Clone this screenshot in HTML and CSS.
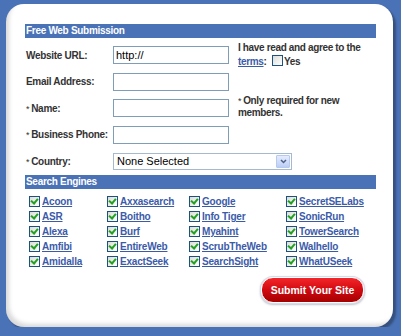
FILE: index.html
```html
<!DOCTYPE html>
<html lang="en">
<head>
    <meta charset="UTF-8">
    <title>Free Web Submission</title>
    <link rel="stylesheet" href="styles.css">
</head>
<body>
<div class="panel">
    <div class="bar">Free Web Submission</div>

    <div class="form">
        <label class="lbl">Website URL:</label>
        <input class="field" type="text" value="http://">
        <div class="note agree">I have read and agree to the<br><a href="#">terms</a>: <span class="box"></span>Yes</div>

        <label class="lbl">Email Address:</label>
        <input class="field" type="text">

        <label class="lbl"><span class="req">*</span>Name:</label>
        <input class="field" type="text">
        <div class="note only"><span class="req">*</span>Only required for new<br>members.</div>

        <label class="lbl"><span class="req">*</span>Business Phone:</label>
        <input class="field" type="text">

        <label class="lbl"><span class="req">*</span>Country:</label>
        <div class="select">None Selected
            <span class="arrow">
                <svg width="7" height="5" viewBox="0 0 7 5"><path d="M1 1 L3.5 3.5 L6 1" fill="none" stroke="#4d6185" stroke-width="1.5"/></svg>
            </span>
        </div>
    </div>

    <div class="bar">Search Engines</div>

    <div class="engines">
        <label class="eng"><span class="chk"></span><a href="#">Acoon</a></label>
        <label class="eng"><span class="chk"></span><a href="#">Axxasearch</a></label>
        <label class="eng"><span class="chk"></span><a href="#">Google</a></label>
        <label class="eng"><span class="chk"></span><a href="#">SecretSELabs</a></label>

        <label class="eng"><span class="chk"></span><a href="#">ASR</a></label>
        <label class="eng"><span class="chk"></span><a href="#">Boitho</a></label>
        <label class="eng"><span class="chk"></span><a href="#">Info Tiger</a></label>
        <label class="eng"><span class="chk"></span><a href="#">SonicRun</a></label>

        <label class="eng"><span class="chk"></span><a href="#">Alexa</a></label>
        <label class="eng"><span class="chk"></span><a href="#">Burf</a></label>
        <label class="eng"><span class="chk"></span><a href="#">Myahint</a></label>
        <label class="eng"><span class="chk"></span><a href="#">TowerSearch</a></label>

        <label class="eng"><span class="chk"></span><a href="#">Amfibi</a></label>
        <label class="eng"><span class="chk"></span><a href="#">EntireWeb</a></label>
        <label class="eng"><span class="chk"></span><a href="#">ScrubTheWeb</a></label>
        <label class="eng"><span class="chk"></span><a href="#">Walhello</a></label>

        <label class="eng"><span class="chk"></span><a href="#">Amidalla</a></label>
        <label class="eng"><span class="chk"></span><a href="#">ExactSeek</a></label>
        <label class="eng"><span class="chk"></span><a href="#">SearchSight</a></label>
        <label class="eng"><span class="chk"></span><a href="#">WhatUSeek</a></label>
    </div>

    <div class="actions">
        <button class="submit">Submit Your Site</button>
    </div>
</div>
</body>
</html>
```

FILE: styles.css
```css
body {
    margin: 0;
    background: #4a72b6;
    font-family: "Liberation Sans", Arial, sans-serif;
    color: #333;
}

.panel {
    margin: 4px 8px 0 6px;
    height: 323px;
    box-sizing: border-box;
    padding: 20px 17px 0 19px;
    background: #fff;
    border-radius: 18px;
    box-shadow: 3px 3px 2px rgba(30, 40, 60, 0.45), inset 4px -4px 4px -1px rgba(0, 0, 0, 0.15);
}

.bar {
    height: 14px;
    line-height: 14px;
    background: #4a72b6;
    color: #fff;
    font-size: 10px;
    font-weight: bold;
    letter-spacing: -0.3px;
    padding-left: 1px;
}

.form {
    display: grid;
    grid-template-columns: 88px 125px 1fr;
    grid-auto-rows: 18px;
    row-gap: 8.5px;
    margin: 8px 0 5px;
}

.lbl {
    grid-column: 1;
    align-self: center;
    font-size: 10px;
    font-weight: bold;
    letter-spacing: -0.3px;
    padding-left: 1px;
}

.req {
    font-weight: normal;
    font-size: 9px;
    margin-right: 2px;
}

.field {
    grid-column: 2;
    width: 116px;
    height: 18px;
    box-sizing: border-box;
    border: 1px solid #7f9db9;
    padding: 0 2px;
    font-family: "Liberation Sans", Arial, sans-serif;
    font-size: 11px;
    color: #000;
    outline: none;
}

.note {
    grid-column: 3;
    font-size: 10px;
    font-weight: bold;
    letter-spacing: -0.35px;
}

.agree {
    grid-row: 1 / span 2;
    margin-top: -5px;
    line-height: 14px;
}

.only {
    grid-row: 3 / span 2;
    margin-top: -4px;
    line-height: 12px;
}

.note a,
.eng a {
    color: #3b5ba9;
    text-decoration: underline;
}

.box {
    display: inline-block;
    width: 9px;
    height: 9px;
    border: 1px solid #1c5180;
    background: linear-gradient(135deg, #dcdcd7, #fff);
    vertical-align: -1px;
    margin: 0 1px 0 3px;
}

.select {
    grid-column: 2 / span 2;
    width: 179px;
    height: 17px;
    box-sizing: border-box;
    align-self: center;
    border: 1px solid #a5b9cf;
    display: flex;
    align-items: center;
    justify-content: space-between;
    padding-left: 3px;
    font-size: 11px;
    color: #000;
}

.arrow {
    width: 14px;
    height: 13px;
    margin-right: 1px;
    display: flex;
    align-items: center;
    justify-content: center;
    background: linear-gradient(#e4ecfd, #bccdf6);
    border: 1px solid #b8c9ee;
    box-sizing: border-box;
    border-radius: 1px;
}

.engines {
    display: grid;
    grid-template-columns: 78px 82px 97px 1fr;
    grid-auto-rows: 15px;
    padding: 5px 0 0 4px;
}

.eng {
    display: flex;
    align-items: center;
    gap: 2px;
    font-size: 10px;
    font-weight: bold;
    letter-spacing: -0.2px;
}

.chk {
    position: relative;
    width: 9px;
    height: 9px;
    border: 1px solid #1c5180;
    background: linear-gradient(135deg, #dcdcd7, #fff);
}

.chk::after {
    content: "";
    position: absolute;
    left: 2px;
    top: 0;
    width: 3px;
    height: 5px;
    border: solid #21a121;
    border-width: 0 2px 2px 0;
    transform: rotate(40deg);
}

.actions {
    display: flex;
    justify-content: flex-end;
    padding: 8px 12px 0 0;
}

.submit {
    width: 103px;
    height: 26px;
    border: 1px solid #fff;
    border-radius: 12px;
    background: linear-gradient(#f2262a, #d10a10 50%, #a50000);
    box-shadow: 0 0 0 1px #d8dce6, 0 1px 2px 1px rgba(80, 90, 120, 0.35);
    color: #fff;
    font-family: "Liberation Sans", Arial, sans-serif;
    font-size: 10.5px;
    font-weight: bold;
    padding: 0;
}
```
